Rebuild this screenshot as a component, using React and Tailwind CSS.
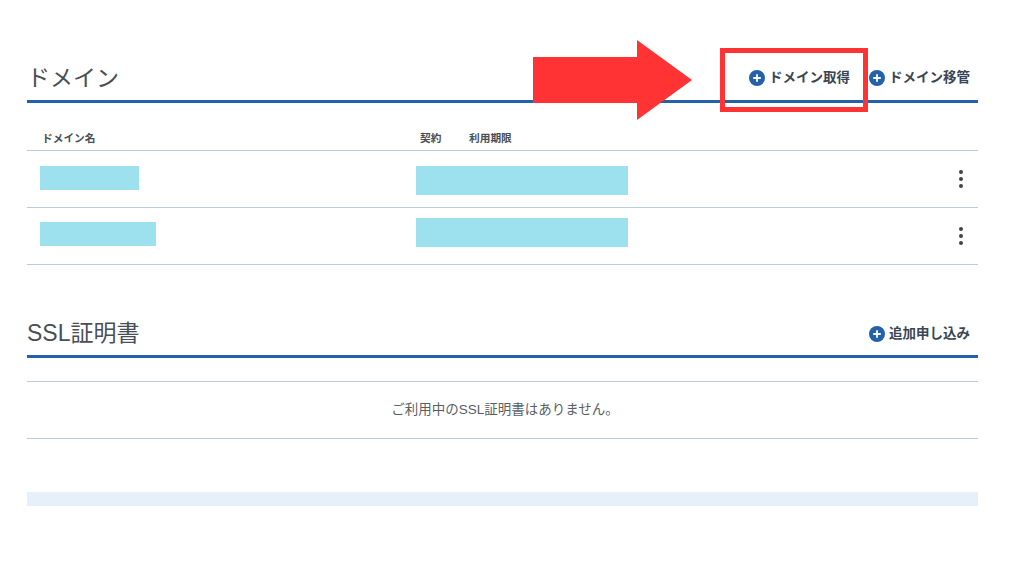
const FONT = "font-['Liberation_Sans','Noto_Sans_CJK_JP',sans-serif]";

function Plus() {
  return (
    <svg width="16" height="16" viewBox="0 0 16 16" className="shrink-0">
      <circle cx="8" cy="8" r="8" fill="#2362a8" />
      <path d="M8 4.2v7.6M4.2 8h7.6" stroke="#fff" strokeWidth="1.8" />
    </svg>
  );
}

function Action({ label }) {
  return (
    <div className="flex items-center gap-[4px] text-[13.5px] leading-[16px] font-bold text-[#3a4654]">
      <Plus />
      <span>{label}</span>
    </div>
  );
}

function Dots() {
  return (
    <div className="flex flex-col gap-[3px]">
      <span className="block w-[4px] h-[4px] rounded-full bg-[#3f444b]" />
      <span className="block w-[4px] h-[4px] rounded-full bg-[#3f444b]" />
      <span className="block w-[4px] h-[4px] rounded-full bg-[#3f444b]" />
    </div>
  );
}

function Header({ title, children }) {
  return (
    <div className="h-[43px] flex items-start justify-between border-b-[3px] border-[#2362a8]">
      <h2 className="text-[23px] leading-[36px] font-normal text-[#4a4f55]">{title}</h2>
      <div className="flex items-center gap-[19px] pr-[8px] h-[36px]">{children}</div>
    </div>
  );
}

function Row({ nameW, nameH, nameMt, termH, termMt }) {
  return (
    <div className="h-[57px] border-b border-[#b9cde2] flex items-start">
      <div className="w-[389px] pl-[13px]">
        <div className="bg-[#9ce1ed]" style={{ width: nameW, height: nameH, marginTop: nameMt }} />
      </div>
      <div className="flex-1">
        <div className="w-[212px] bg-[#9ce1ed]" style={{ height: termH, marginTop: termMt }} />
      </div>
      <div className="pr-[15px] pt-[19px]">
        <Dots />
      </div>
    </div>
  );
}

export default function App() {
  return (
    <div className={`relative w-[1024px] h-[576px] bg-white overflow-hidden ${FONT}`}>
      <div className="w-[951px] ml-[27px] pt-[60px]">
        <Header title="ドメイン">
          <Action label="ドメイン取得" />
          <Action label="ドメイン移管" />
        </Header>
        <div className="h-[48px] border-b border-[#b9cde2] flex items-end pb-[4px] text-[10.7px] leading-[16px] font-bold text-[#4a4f55]">
          <div className="w-[393px] pl-[15px]">ドメイン名</div>
          <div className="w-[49px]">契約</div>
          <div>利用期限</div>
        </div>
        <Row nameW={99} nameH={24} nameMt={15} termH={29} termMt={15} />
        <Row nameW={116} nameH={24} nameMt={14} termH={29} termMt={10} />
        <div className="mt-[50px]">
          <Header title="SSL証明書">
            <div className="pt-[1px]">
              <Action label="追加申し込み" />
            </div>
          </Header>
        </div>
        <div className="h-[24px] border-b border-[#b9cde2]" />
        <div className="h-[57px] border-b border-[#b9cde2] flex items-center justify-center pl-[5px] text-[13.5px] text-[#5a5f66]">
          ご利用中のSSL証明書はありません。
        </div>
        <div className="mt-[53px] h-[14px] bg-[#e6f0fa]" />
      </div>

      <svg className="absolute left-[530px] top-[38px]" width="166" height="84" viewBox="0 0 166 84">
        <path d="M3 19H107V2L162 42L107 82V65H3Z" fill="#ff3333" />
      </svg>
      <div className="absolute left-[720px] top-[48px] w-[148px] h-[64px] border-[5px] border-[#ff3333]" />
    </div>
  );
}
